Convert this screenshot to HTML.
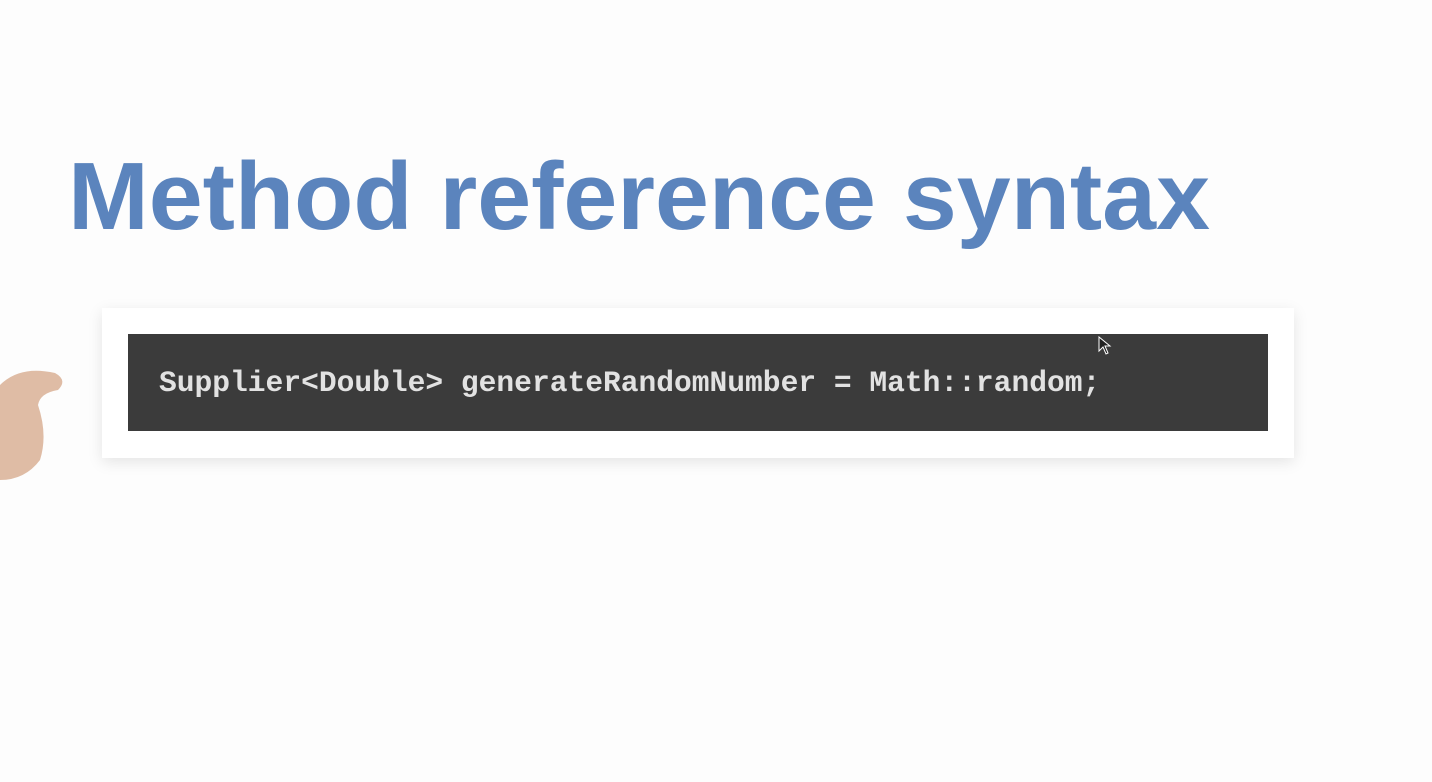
<!DOCTYPE html>
<html><head><style>
body{margin:0;width:1432px;height:782px;background:#fdfdfd;overflow:hidden;position:relative;font-family:"Liberation Sans",sans-serif}
.card{position:absolute;left:102px;top:308px;width:1192px;height:150px;background:#fff;box-shadow:0 4px 14px rgba(0,0,0,0.10)}
.code{position:absolute;left:128px;top:334px;width:1140px;height:97px;background:#3b3b3b}
.code span{position:absolute;left:31px;top:32px;font-family:"Liberation Mono",monospace;font-size:29.6px;font-weight:bold;color:#e2e2e2;white-space:pre}
.hand{position:absolute;left:-30px;top:365px;width:95px;height:115px}
</style></head><body>
<svg style="position:absolute;left:0;top:0" width="1432" height="260">
<text x="68" y="229" font-family="Liberation Sans" font-weight="bold" font-size="96" fill="#5b84bd" textLength="1142" lengthAdjust="spacingAndGlyphs">Method reference syntax</text>
</svg>
<div class="card"></div>
<div class="code"><span>Supplier&lt;Double&gt; generateRandomNumber = Math::random;</span></div>
<svg class="hand" viewBox="0 0 95 115"><path d="M30 20 Q50 0 85 8 Q98 15 88 25 Q70 28 68 40 Q78 70 70 95 Q55 115 30 115 L30 20Z" fill="#d9b095" opacity="0.85"/></svg>
<svg style="position:absolute;left:1098px;top:336px" width="14" height="20"><path d="M1 1 L1 15 L5 11 L8 18 L10 17 L7 10 L12 10 Z" fill="#222" stroke="#fff" stroke-width="1"/></svg>
</body></html>
